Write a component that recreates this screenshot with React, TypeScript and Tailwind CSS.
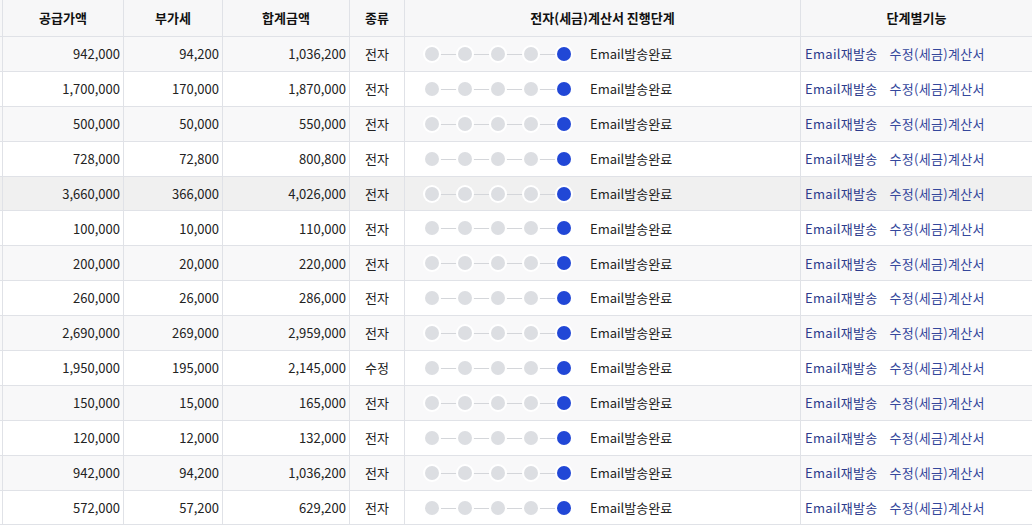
const rows: [string,string,string,string,boolean][] = [
["942,000","94,200","1,036,200","전자",false],
["1,700,000","170,000","1,870,000","전자",false],
["500,000","50,000","550,000","전자",false],
["728,000","72,800","800,800","전자",false],
["3,660,000","366,000","4,026,000","전자",true],
["100,000","10,000","110,000","전자",false],
["200,000","20,000","220,000","전자",false],
["260,000","26,000","286,000","전자",false],
["2,690,000","269,000","2,959,000","전자",false],
["1,950,000","195,000","2,145,000","수정",false],
["150,000","15,000","165,000","전자",false],
["120,000","12,000","132,000","전자",false],
["942,000","94,200","1,036,200","전자",false],
["572,000","57,200","629,200","전자",false],
];
const cols = "grid grid-cols-[2px_121px_99px_127px_55px_396px_232px]";
const cell = "border-l border-[#e0e2e7] flex items-center";
function Steps() {
  return (
    <div className="relative flex items-center gap-[19px] ml-[20px]">
      <div className="absolute left-[7px] right-[7px] top-1/2 h-px bg-[#d4d6da]" />
      {[0,1,2,3].map(i => <div key={i} className="relative w-[14px] h-[14px] rounded-full bg-[#dcdee2] ring-2 ring-white" />)}
      <div className="relative w-[14px] h-[14px] rounded-full bg-[#2147d6] ring-2 ring-white" />
    </div>
  );
}
export default function App() {
  return (
    <div className="w-[1032px] h-[525px] overflow-hidden bg-white text-[13px] text-[#222]" style={{fontFamily:'"Noto Sans CJK KR","Noto Sans",sans-serif'}}>
      <div className={`${cols} h-[37px] bg-[#f7f7f8] border-b border-[#e0e2e7] font-bold text-[#111]`}>
        <div />
        {["공급가액","부가세","합계금액","종류","전자(세금)계산서 진행단계","단계별기능"].map(h => <div key={h} className={`${cell} justify-center`}>{h}</div>)}
      </div>
      {rows.map((r, i) => (
        <div key={i} className={`${cols} h-[34.9px] border-b border-[#e0e2e7] ${r[4] ? "bg-[#f0f0f0]" : i % 2 === 0 ? "bg-[#f8f8f9]" : "bg-white"}`}>
          <div />
          <div className={`${cell} justify-end pr-[3px]`}>{r[0]}</div>
          <div className={`${cell} justify-end pr-[3px]`}>{r[1]}</div>
          <div className={`${cell} justify-end pr-[3px]`}>{r[2]}</div>
          <div className={`${cell} justify-center`}>{r[3]}</div>
          <div className={`${cell}`}><Steps /><span className="ml-[19px]">Email발송완료</span></div>
          <div className={`${cell} pl-[4px] gap-[12px] text-[#2c3a8c] tracking-[0.3px]`}><span>Email재발송</span><span className="text-[#34479c]">수정(세금)계산서</span></div>
        </div>
      ))}
    </div>
  );
}
